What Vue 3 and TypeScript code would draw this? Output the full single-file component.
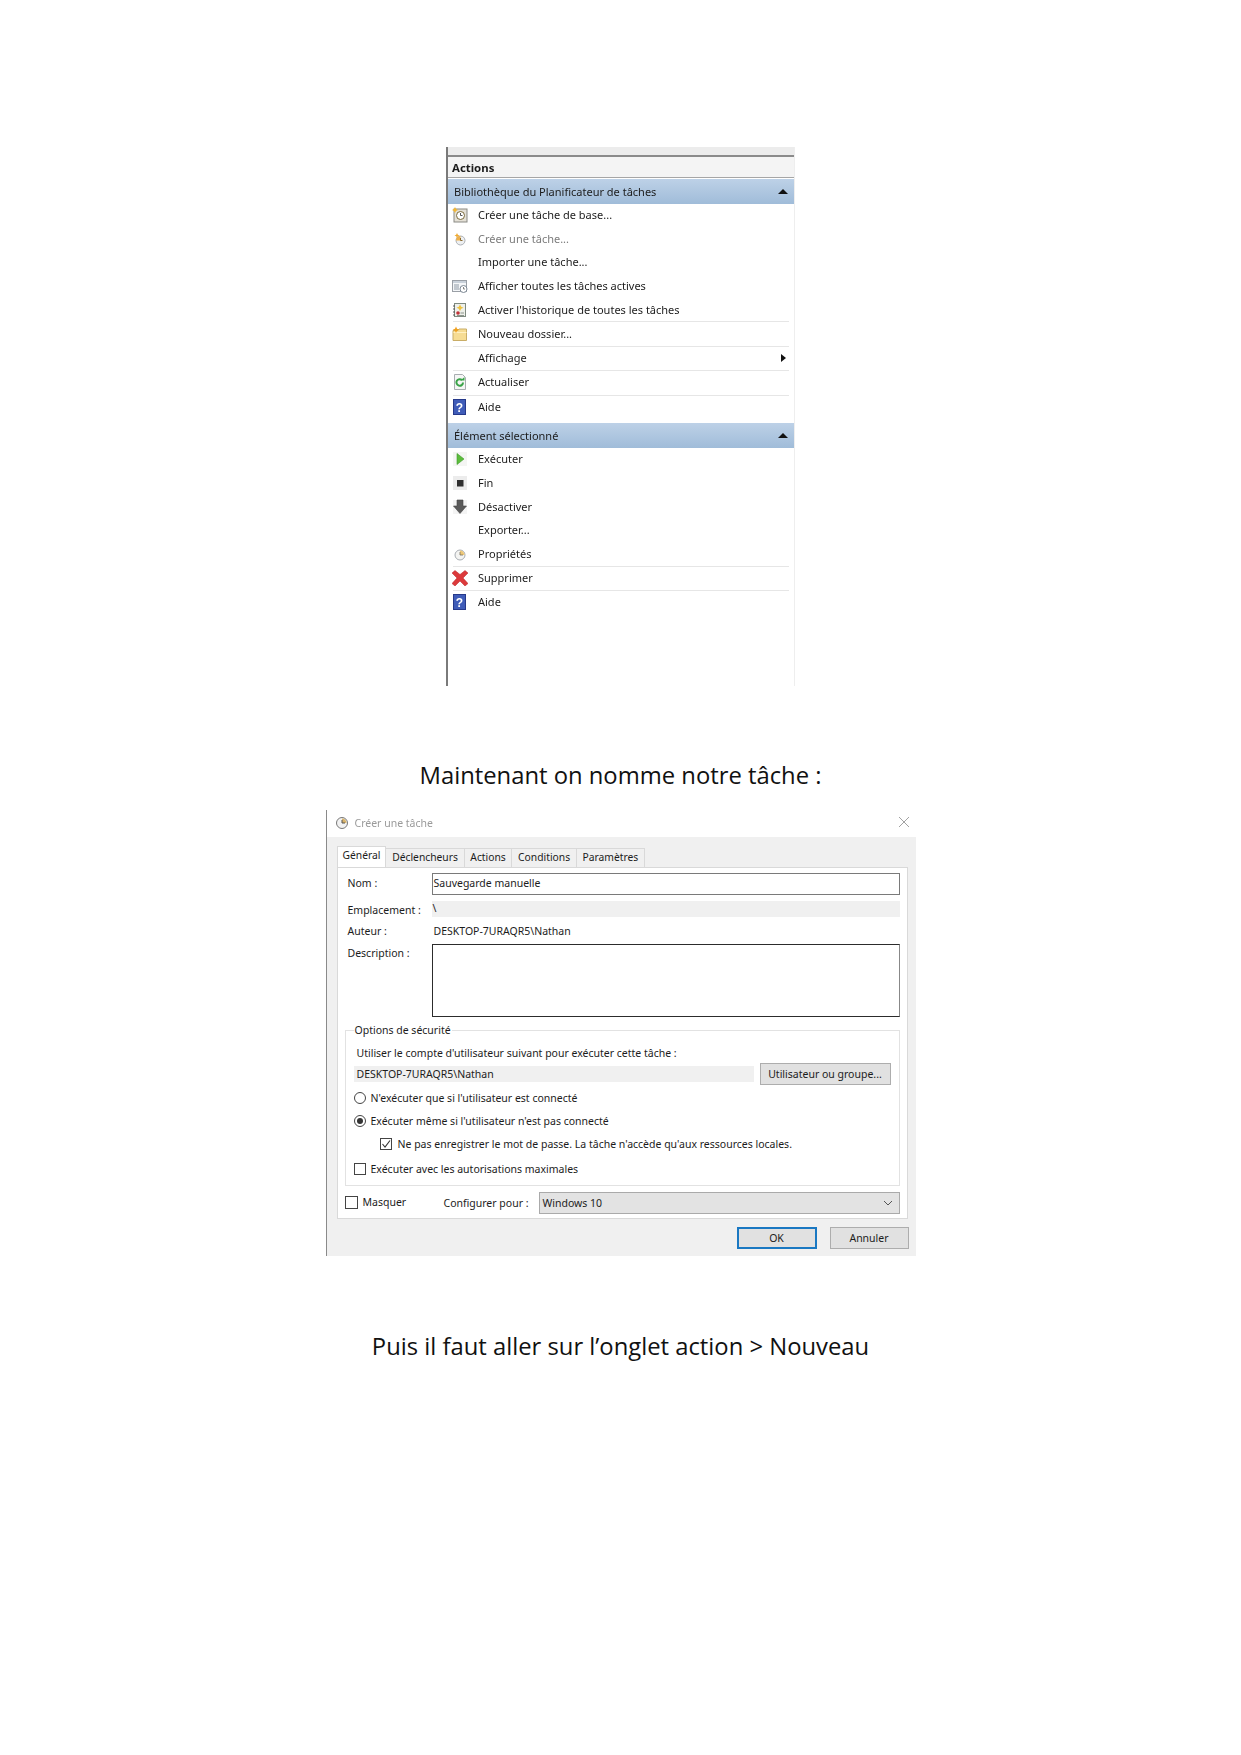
<script setup lang="ts">
type Row = { label: string; icon?: string; sep?: boolean; muted?: boolean; arrow?: boolean }

const libraryRows: Row[] = [
  { label: 'Créer une tâche de base...', icon: 'basic' },
  { label: 'Créer une tâche...', icon: 'task', muted: true },
  { label: 'Importer une tâche...' },
  { label: 'Afficher toutes les tâches actives', icon: 'list' },
  { label: "Activer l'historique de toutes les tâches", icon: 'history' },
  { label: 'Nouveau dossier...', icon: 'folder', sep: true },
  { label: 'Affichage', sep: true, arrow: true },
  { label: 'Actualiser', icon: 'refresh', sep: true },
  { label: 'Aide', icon: 'help', sep: true },
]

const selectedRows: Row[] = [
  { label: 'Exécuter', icon: 'run' },
  { label: 'Fin', icon: 'stop' },
  { label: 'Désactiver', icon: 'down' },
  { label: 'Exporter...' },
  { label: 'Propriétés', icon: 'clock' },
  { label: 'Supprimer', icon: 'delete', sep: true },
  { label: 'Aide', icon: 'help', sep: true },
]

const sections = [
  { title: 'Bibliothèque du Planificateur de tâches', rows: libraryRows },
  { title: 'Élément sélectionné', rows: selectedRows },
]

const tabs = ['Général', 'Déclencheurs', 'Actions', 'Conditions', 'Paramètres']
</script>

<template>
  <main class="page">
    <section class="actions">
      <div class="actions__top"></div>
      <h2 class="actions__title">Actions</h2>
      <div v-for="section in sections" :key="section.title" class="group">
        <div class="group__head">
          <span>{{ section.title }}</span>
          <i class="tri-up"></i>
        </div>
        <div
          v-for="row in section.rows"
          :key="row.label"
          class="row"
          :class="{ 'row--sep': row.sep, 'row--muted': row.muted }"
        >
          <svg class="row__icon" viewBox="0 0 16 16" aria-hidden="true">
            <template v-if="row.icon === 'basic'">
              <rect x="2" y="2" width="13" height="13" fill="#e4e0d6" stroke="#8a8a84" />
              <circle cx="8.5" cy="8.5" r="4" fill="#fff" stroke="#7a6a3a" />
              <path d="M8.5 6v2.5h2" fill="none" stroke="#555" />
              <path d="M3 0l1 2 2 1-2 1-1 2-1-2-2-1 2-1z" fill="#f2b632" />
            </template>
            <template v-else-if="row.icon === 'task'">
              <circle cx="8.5" cy="9.5" r="4.5" fill="#eef0f2" stroke="#a9aeb4" />
              <path d="M4 9.5a4.5 4.5 0 0 1 4.5-4.5V9.5z" fill="#eeb04a" />
              <path d="M8.5 7v2.5h2" fill="none" stroke="#8a6a30" />
              <path d="M5 2l.8 1.7 1.7.8-1.7.8L5 7l-.8-1.7-1.7-.8 1.700-.8z" fill="#f0a92c" />
            </template>
            <template v-else-if="row.icon === 'list'">
              <rect x="0.500" y="2.500" width="14" height="11" fill="#f4f6f8" stroke="#9a9fa6" />
              <rect x="1" y="3" width="13" height="2" fill="#c9d1da" />
              <path d="M2 7h5M2 9h5M2 11h5" stroke="#8f9aa6" />
              <circle cx="11.500" cy="11" r="3.500" fill="#fff" stroke="#7d8894" />
              <path d="M11.500 9v2h1.500" fill="none" stroke="#666" stroke-width=".8" />
            </template>
            <template v-else-if="row.icon === 'history'">
              <rect x="2.500" y="1.500" width="11" height="13" fill="#eef0ea" stroke="#7f8a80" />
              <path d="M1 4h2M1 7h2M1 10h2M1 13h2" stroke="#555" />
              <path d="M8 2.500l1.200 2.300 2.300 1-2.300 1L8 9 6.800 6.800l-2.300-1 2.300-1z" fill="#eec23e" />
              <circle cx="6" cy="11" r="1.800" fill="#c2323a" />
              <path d="M8.500 11h3.500M5 13.500h7" stroke="#8c958c" />
            </template>
            <template v-else-if="row.icon === 'folder'">
              <path d="M1 4.500h5l1-1.500h7.500v11.500H1z" fill="#f6dc93" stroke="#c9ad66" />
              <path d="M1.500 6.500h13" stroke="#fff0c2" />
              <path d="M4 0.500l1 2.200 2.200 1-2.200 1L4 7 3 4.700l-2.200-1 2.200-1z" fill="#f0a01e" />
            </template>
            <template v-else-if="row.icon === 'refresh'">
              <path d="M2.500 0.500h8l3 3v12h-11z" fill="#f5f6f5" stroke="#a8adb0" />
              <path d="M11 8.500a3.300 3.300 0 1 1-1-2.400" fill="none" stroke="#3aa348" stroke-width="2" />
              <path d="M8.500 6.500h4v-3.500z" fill="#3aa348" />
            </template>
            <template v-else-if="row.icon === 'help'">
              <rect x="1.500" y="0.500" width="12" height="15" fill="#3f5cb8" stroke="#26398a" />
              <text x="7.500" y="12.500" text-anchor="middle" class="row__q">?</text>
            </template>
            <template v-else-if="row.icon === 'run'">
              <rect x="1" y="1" width="14" height="14" fill="#f4f5f3" />
              <path d="M5 2.500l7 5.500-7 5.500z" fill="#5cbd3c" stroke="#3f9a2c" stroke-width=".6" />
            </template>
            <template v-else-if="row.icon === 'stop'">
              <rect x="1" y="1" width="14" height="14" fill="#ececec" />
              <rect x="5" y="5" width="6.500" height="6.500" fill="#2f2f2f" />
            </template>
            <template v-else-if="row.icon === 'down'">
              <rect x="1" y="1" width="14" height="14" fill="#f4f4f4" />
              <path d="M5 1h6v6h3.500L8 14.500 1.500 7H5z" fill="#5a5a5a" stroke="#454545" stroke-width=".6" />
            </template>
            <template v-else-if="row.icon === 'clock'">
              <circle cx="8" cy="9" r="5" fill="#f4f4f2" stroke="#a7acb2" />
              <path d="M8 4.500a4.500 4.500 0 0 1 4.500 4.500H8z" fill="#eec878" />
              <path d="M8 6v3h3" fill="none" stroke="#77705e" stroke-width=".8" />
            </template>
            <template v-else-if="row.icon === 'delete'">
              <path d="M0 3l3-2.500 5 4 5-4 3 2.500-5 5 5 5.500-3 2.500-5-5-5 5-3-2.500 5-5.500z" fill="#dc3a3c" stroke="#b82226" stroke-width=".5" />
            </template>
          </svg>
          <span class="row__label">{{ row.label }}</span>
          <i v-if="row.arrow" class="tri-right"></i>
        </div>
      </div>
    </section>

    <p class="caption caption--first">Maintenant on nomme notre tâche :</p>

    <section class="dialog">
      <header class="dialog__bar">
        <svg class="dialog__icon" viewBox="0 0 14 14" aria-hidden="true">
          <circle cx="7" cy="7" r="5.500" fill="#f2f2f2" stroke="#777" />
          <path d="M7 2.500a4.500 4.500 0 0 1 4.500 4.500H7z" fill="#d8b36a" />
          <path d="M7 4v3h3" fill="none" stroke="#555" />
        </svg>
        <span class="dialog__title">Créer une tâche</span>
        <svg class="dialog__close" viewBox="0 0 10 10" aria-hidden="true">
          <path d="M0 0l10 10M10 0L0 10" stroke="#8a8a8a" stroke-width=".8" />
        </svg>
      </header>

      <div class="dialog__body">
        <nav class="tabs">
          <span
            v-for="(tab, i) in tabs"
            :key="tab"
            class="tab"
            :class="{ 'tab--on': i === 0 }"
          >{{ tab }}</span>
        </nav>

        <div class="panel">
          <div class="field field--nom">
            <label>Nom :</label>
            <div class="input">Sauvegarde manuelle</div>
          </div>
          <div class="field field--loc">
            <label>Emplacement :</label>
            <div class="readonly">\</div>
          </div>
          <div class="field field--author">
            <label>Auteur :</label>
            <div class="plain">DESKTOP-7URAQR5\Nathan</div>
          </div>
          <div class="field field--desc">
            <label>Description :</label>
            <div class="textarea"></div>
          </div>

          <fieldset class="security">
            <legend>Options de sécurité</legend>
            <p class="security__intro">Utiliser le compte d'utilisateur suivant pour exécuter cette tâche :</p>
            <div class="account">
              <div class="account__name">DESKTOP-7URAQR5\Nathan</div>
              <button class="btn btn--user" type="button">Utilisateur ou groupe...</button>
            </div>
            <div class="opt opt--a"><i class="radio"></i>N'exécuter que si l'utilisateur est connecté</div>
            <div class="opt opt--b"><i class="radio radio--on"></i>Exécuter même si l'utilisateur n'est pas connecté</div>
            <div class="opt opt--c">
              <i class="check">
                <svg viewBox="0 0 10 10" aria-hidden="true"><path d="M1.500 5l2.500 3 5-6.500" fill="none" stroke="#333" stroke-width="1.100" /></svg>
              </i>
              Ne pas enregistrer le mot de passe. La tâche n'accède qu'aux ressources locales.
            </div>
            <div class="opt opt--d"><i class="check"></i>Exécuter avec les autorisations maximales</div>
          </fieldset>

          <div class="bottom">
            <i class="check check--lg"></i>
            <span class="bottom__hide">Masquer</span>
            <span class="bottom__label">Configurer pour :</span>
            <div class="select">
              <span>Windows 10</span>
              <svg viewBox="0 0 10 6" aria-hidden="true"><path d="M1 1l4 4 4-4" fill="none" stroke="#555" /></svg>
            </div>
          </div>
        </div>

        <div class="footer">
          <button class="btn btn--ok" type="button">OK</button>
          <button class="btn btn--cancel" type="button">Annuler</button>
        </div>
      </div>
    </section>

    <p class="caption caption--second">Puis il faut aller sur l’onglet action &gt; Nouveau</p>
  </main>
</template>

<style scoped>
.page {
  width: 1241px;
  height: 1755px;
  padding-top: 147px;
  box-sizing: border-box;
  display: flex;
  flex-direction: column;
  align-items: center;
  background: #fff;
  color: #1c1c1c;
  font-family: "Noto Sans", "Open Sans", sans-serif;
  font-size: 11px;
}

.actions {
  width: 349px;
  height: 539px;
  box-sizing: border-box;
  border-left: 2px solid #7a7a7a;
  border-right: 1px solid #eee;
  overflow: hidden;
  flex-shrink: 0;
  filter: blur(0.3px);
}

.actions__top {
  height: 8px;
  margin-left: -2px;
  background: #ececec;
  border-bottom: 2px solid #8a8a8a;
}

.actions__title {
  margin: 0 0 1px;
  height: 21px;
  line-height: 22px;
  padding-left: 4px;
  box-sizing: border-box;
  font-size: 11.400px;
  font-weight: 700;
  background: #f4f4f4;
  border-bottom: 1px solid #a6a6a6;
}

.group {
  margin-bottom: 4px;
}

.group__head {
  height: 24.500px;
  padding: 0 6px 0 6px;
  display: flex;
  align-items: center;
  justify-content: space-between;
  background: linear-gradient(180deg, #bdd1e7 0%, #a0bcd9 100%);
}

.tri-up {
  width: 0;
  height: 0;
  border-left: 5px solid transparent;
  border-right: 5px solid transparent;
  border-bottom: 5px solid #111;
}

.row {
  position: relative;
  height: 23.600px;
  display: flex;
  align-items: center;
  padding: 0 8px 0 4px;
  box-sizing: border-box;
}

.row--sep {
  height: 24.400px;
}

.row--sep::before {
  content: '';
  position: absolute;
  top: 0;
  left: 5px;
  right: 5px;
  height: 1px;
  background: #e6e6e6;
}

.row--muted .row__label {
  color: #7c7c7c;
}

.row__icon {
  width: 16px;
  height: 16px;
  flex-shrink: 0;
}

.row__q {
  fill: #fff;
  font-size: 12px;
  font-weight: 700;
  font-family: "Liberation Sans", sans-serif;
}

.row__label {
  margin-left: 10px;
  padding-bottom: 1px;
  flex: 1;
}

.tri-right {
  width: 0;
  height: 0;
  border-top: 4px solid transparent;
  border-bottom: 4px solid transparent;
  border-left: 5px solid #111;
}

.caption {
  margin: 0;
  font-family: "Open Sans", "Noto Sans", sans-serif;
  font-size: 23.800px;
  line-height: 30px;
  color: #111;
  white-space: nowrap;
}

.caption--first {
  margin-top: 74px;
}

.caption--second {
  margin-top: 75px;
}

.dialog {
  width: 590px;
  height: 446px;
  margin-top: 20px;
  box-sizing: border-box;
  border-left: 1px solid #8a8a8a;
  flex-shrink: 0;
  display: flex;
  flex-direction: column;
  filter: blur(0.3px);
  font-size: 10.500px;
}

.dialog__bar {
  height: 27px;
  box-sizing: border-box;
  display: flex;
  align-items: center;
  padding: 0 6px 2px 8px;
}

.dialog__icon {
  width: 14px;
  height: 14px;
}

.dialog__title {
  margin-left: 6px;
  color: #9a9a9a;
  flex: 1;
}

.dialog__close {
  width: 10px;
  height: 10px;
  margin-right: 1px;
  margin-bottom: 2px;
}

.dialog__body {
  flex: 1;
  background: #f0f0f0;
  padding: 10px 8px 0 10px;
}

.tabs {
  display: flex;
  height: 20px;
  font-size: 10.300px;
}

.tab {
  height: 19px;
  margin-top: 1px;
  box-sizing: border-box;
  border: 1px solid #d9d9d9;
  border-bottom: none;
  border-left: none;
  padding: 0 5.700px;
  line-height: 16px;
  white-space: nowrap;
}

.tab--on {
  height: 21px;
  margin-top: -1px;
  padding: 0 5px;
  border-left: 1px solid #d9d9d9;
  background: #fff;
  line-height: 16px;
  position: relative;
  z-index: 1;
}

.panel {
  height: 352px;
  box-sizing: border-box;
  border: 1px solid #d9d9d9;
  background: #fff;
  padding: 5px 7px 0;
}

.field {
  display: grid;
  grid-template-columns: 87px 1fr;
}

.field label {
  padding-left: 3px;
}

.field--nom {
  height: 28px;
  line-height: 20px;
}

.input {
  height: 22px;
  box-sizing: border-box;
  border: 1px solid #7a7a7a;
  padding-left: 1px;
  line-height: 19px;
}

.field--loc {
  height: 22px;
  line-height: 19px;
}

.readonly {
  height: 16px;
  background: #f0f0f0;
  line-height: 14px;
  padding-left: 1px;
}

.field--author {
  height: 21px;
  line-height: 16px;
}

.plain {
  padding-left: 2px;
}

.field--desc {
  height: 73px;
}

.field--desc label {
  line-height: 19px;
}

.textarea {
  border: 1px solid #2c2c2c;
  border-right-color: #888;
}

.security {
  position: relative;
  height: 163px;
  margin: 6px 0 0;
  padding: 0 8px;
  box-sizing: border-box;
  border: 1px solid #e2e2e2;
}

.security legend {
  padding: 0 1px;
  margin-left: 0;
  line-height: 14px;
}

.security__intro {
  margin: 7.500px 0 0 3px;
  line-height: 17px;
}

.account {
  margin-top: 1.500px;
  height: 22px;
  display: flex;
  align-items: center;
}

.account__name {
  width: 397px;
  height: 16px;
  padding-left: 3px;
  line-height: 16px;
  background: #f0f0f0;
}

.btn {
  font: inherit;
  color: inherit;
  background: #e1e1e1;
  border: 1px solid #adadad;
  padding: 0;
  box-sizing: border-box;
  height: 22px;
  white-space: nowrap;
}

.btn--user {
  width: 131px;
  margin-left: 6px;
}

.opt {
  display: flex;
  align-items: center;
  height: 22px;
  white-space: nowrap;
}

.opt--a {
  margin-top: 2px;
}

.opt--b {
  height: 24px;
}

.opt--c {
  height: 21px;
  padding-left: 26px;
}

.opt--d {
  height: 30px;
}

.radio {
  width: 12px;
  height: 12px;
  margin-right: 5px;
  box-sizing: border-box;
  border: 1px solid #444;
  border-radius: 50%;
  flex-shrink: 0;
  display: flex;
  align-items: center;
  justify-content: center;
}

.radio--on::after {
  content: '';
  width: 6px;
  height: 6px;
  border-radius: 50%;
  background: #333;
}

.check {
  width: 12px;
  height: 12px;
  margin-right: 5px;
  box-sizing: border-box;
  border: 1px solid #444;
  flex-shrink: 0;
  display: flex;
  background: #fff;
}

.opt--c .check {
  margin-right: 6px;
}

.check svg {
  width: 10px;
  height: 10px;
}

.check--lg {
  width: 13px;
  height: 13px;
  margin-right: 5px;
  margin-bottom: 1px;
}

.bottom {
  display: flex;
  align-items: center;
  height: 22px;
  margin-top: 6px;
}

.bottom__hide {
  width: 81px;
  padding-bottom: 3px;
}

.bottom__label {
  width: 95px;
  padding-bottom: 1px;
  white-space: nowrap;
}

.select {
  flex: 1;
  height: 22px;
  box-sizing: border-box;
  background: #e3e3e3;
  border: 1px solid #aaa;
  display: flex;
  align-items: center;
  justify-content: space-between;
  padding: 0 6px 1px 3px;
}

.select svg {
  width: 10px;
  height: 6px;
}

.footer {
  display: flex;
  justify-content: flex-end;
  margin: 8px -1px 0 0;
}

.btn--ok {
  width: 80px;
  border: 2px solid #1a78c2;
}

.btn--cancel {
  width: 79px;
  margin-left: 13px;
}
</style>

<style>
html,
body {
  margin: 0;
  background: #fff;
}
</style>
